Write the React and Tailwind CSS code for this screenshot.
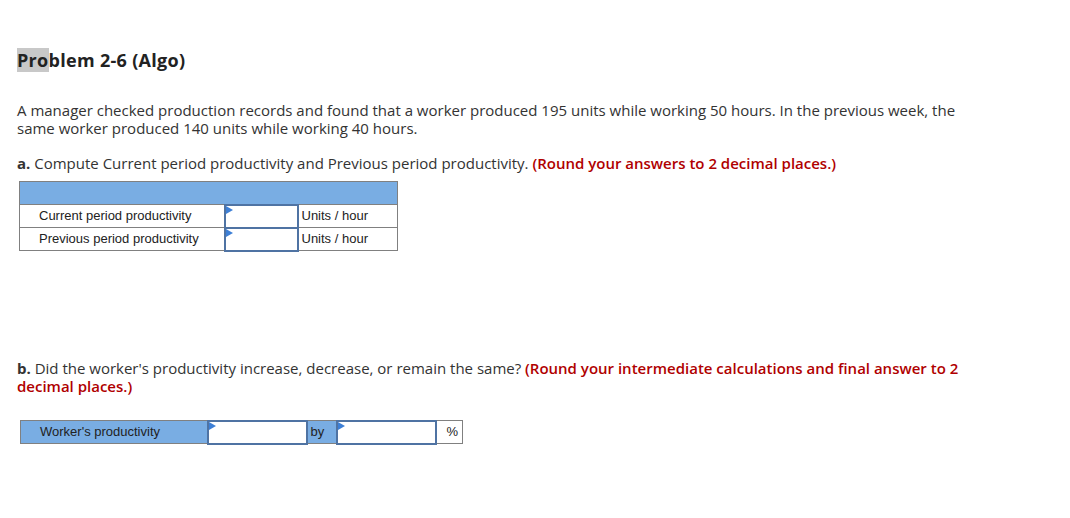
import React from 'react';

const body = { fontFamily: '"Open Sans", Lato, sans-serif' };
const arial = { fontFamily: '"Liberation Sans", Arial, sans-serif' };

function Flag() {
  return (
    <span className="absolute left-0 top-0 w-0 h-0 border-t-[4px] border-b-[4px] border-l-[7px] border-t-transparent border-b-transparent border-l-[#3d7fd6]" />
  );
}

function InputCell({ className }) {
  return (
    <td className={`relative p-0 border-2 border-[#4f73a3] bg-white ${className}`}>
      <Flag />
    </td>
  );
}

export default function App() {
  return (
    <div className="min-h-screen bg-white text-[#333] px-[17px] pt-[48px]" style={body}>
      <h2 className="text-[18px] font-bold leading-[24px] tracking-[0.3px] text-[#222]">
        <span className="bg-[#c8c8c8]">Pro</span>blem 2-6 (Algo)
      </h2>

      <p className="mt-[29px] text-[15px] leading-[18px] max-w-[962px]">
        A manager checked production records and found that a worker produced 195 units while working 50 hours. In the previous week, the same worker produced 140 units while working 40 hours.
      </p>

      <p className="mt-[17px] text-[15px] leading-[18px]">
        <b>a.</b> Compute Current period productivity and Previous period productivity.{' '}
        <span className="font-semibold text-[#b00000]">(Round your answers to 2 decimal places.)</span>
      </p>

      <table className="mt-[9px] ml-[2px] border-collapse text-[13px] text-[#222]" style={arial}>
        <tbody>
          <tr>
            <td colSpan={3} className="h-[23px] bg-[#79ade3] border border-[#808080]" />
          </tr>
          <tr className="h-[23px]">
            <td className="w-[205px] border border-[#808080] pl-[19px]">Current period productivity</td>
            <InputCell className="w-[73px]" />
            <td className="w-[100px] border border-[#808080] pl-[3px]">Units / hour</td>
          </tr>
          <tr className="h-[23px]">
            <td className="border border-[#808080] pl-[19px]">Previous period productivity</td>
            <InputCell />
            <td className="border border-[#808080] pl-[3px]">Units / hour</td>
          </tr>
        </tbody>
      </table>

      <p className="mt-[107px] text-[15px] leading-[18px] max-w-[962px]">
        <b>b.</b> Did the worker's productivity increase, decrease, or remain the same?{' '}
        <span className="font-semibold text-[#b00000]">(Round your intermediate calculations and final answer to 2 decimal places.)</span>
      </p>

      <table className="mt-[25px] ml-[3px] border-collapse text-[13px] text-[#222]" style={arial}>
        <tbody>
          <tr className="h-[23px]">
            <td className="w-[187px] bg-[#79ade3] border border-[#808080] pl-[19px]">Worker's productivity</td>
            <InputCell className="w-[99px]" />
            <td className="w-[30px] bg-[#79ade3] border border-[#808080] pl-[3px]">by</td>
            <InputCell className="w-[99px]" />
            <td className="w-[27px] border border-[#808080] text-right pr-[4px]">%</td>
          </tr>
        </tbody>
      </table>
    </div>
  );
}
